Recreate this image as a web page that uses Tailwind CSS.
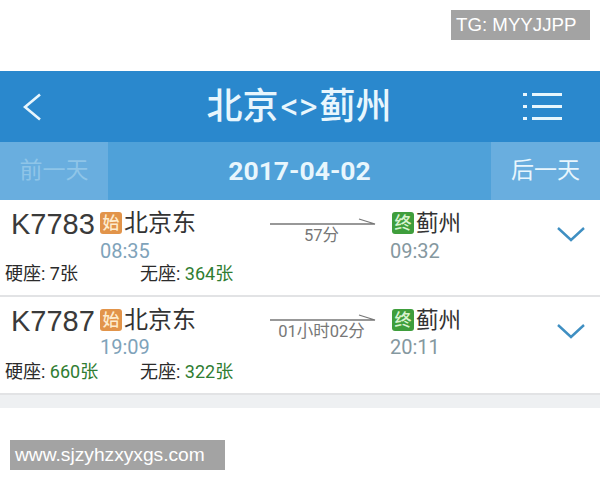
<!DOCTYPE html>
<html lang="zh">
<head>
    <meta charset="UTF-8">
    <title>北京&lt;&gt;蓟州</title>
    <script src="https://cdn.jsdelivr.net/npm/@tailwindcss/browser@4"></script>
</head>
<body class="bg-white w-[600px] h-[480px] overflow-hidden font-['Roboto','Noto_Sans_CJK_SC',sans-serif]">

    <!-- top watermark -->
    <div class="h-[71px] pt-[10px] flex justify-end pr-[10px]">
        <div class="w-[139px] h-[30px] bg-[#a3a3a3] text-white text-[18.700px] leading-[30px] pl-[5px] font-['Liberation_Sans',sans-serif]">TG: MYYJJPP</div>
    </div>

    <!-- header -->
    <div class="h-[71px] bg-[#2a88cd] flex items-center justify-between pl-[23px] pr-[38px] text-[#e8f6fd]">
        <svg class="w-[18px] h-[28px]" viewBox="0 0 18 28" fill="none" stroke="currentColor" stroke-width="2.600"><path d="M17 1.500 2 14 17 26.500"/></svg>
        <div class="text-[36px] leading-[44px] ml-[34px] flex items-center font-medium">北京<span class="px-[2px] font-normal">&lt;&gt;</span>蓟州</div>
        <svg class="w-[39px] h-[30px]" viewBox="0 0 39 30" fill="currentColor">
            <rect x="0" y="1" width="4" height="3"/><rect x="9" y="1" width="30" height="3"/>
            <rect x="0" y="13" width="4" height="3"/><rect x="9" y="13" width="30" height="3"/>
            <rect x="0" y="25" width="4" height="3"/><rect x="9" y="25" width="30" height="3"/>
        </svg>
    </div>

    <!-- date bar -->
    <div class="h-[58px] bg-[#4fa1d9] flex items-center">
        <div class="w-[108px] h-full bg-[#69aedf] flex items-center justify-center text-[23px] text-[#8fc5e8]">前一天</div>
        <div class="flex-1 text-center text-[26.500px] font-bold text-[#e8f6fd]">2017-04-02</div>
        <div class="w-[109px] h-full bg-[#69aedf] flex items-center justify-center text-[23px] text-[#e8f6fd]">后一天</div>
    </div>

    <!-- train 1 -->
    <div class="h-[97px] border-b-2 border-[#e2e3e5] pt-[9px]">
        <div class="flex h-[50px]">
            <div class="w-[100px] pl-[11px] text-[29px] leading-[30px] text-[#3a3a3a] font-['Liberation_Sans',sans-serif]">K7783</div>
            <div class="w-[170px]">
                <div class="flex items-center h-[28px]">
                    <span class="w-[22px] h-[22px] bg-[#e2944a] rounded-[3px] text-[#fdeccf] text-[17px] font-medium leading-[22px] text-center">始</span>
                    <span class="ml-[2px] text-[24px] leading-[28px] text-[#333]">北京东</span>
                </div>
                <div class="text-[20px] leading-[26px] pt-[1px] text-[#7fa3ba]">08:35</div>
            </div>
            <div class="w-[120px] pt-[6px] pr-[17px]">
                <svg class="w-[105px] h-[10px] block overflow-visible" viewBox="0 0 105 10" fill="none" stroke="#777" stroke-width="1.300"><path d="M0 9H105L89 4"/></svg>
                <div class="text-[16.500px] leading-[18px] mt-[2px] text-[#777] text-center">57分</div>
            </div>
            <div class="w-[167px]">
                <div class="flex items-center h-[28px] pl-[2px]">
                    <span class="w-[22px] h-[22px] bg-[#3f9e3c] rounded-[3px] text-[#d8f3cf] text-[17px] font-medium leading-[22px] text-center">终</span>
                    <span class="ml-[2px] text-[22.500px] leading-[28px] text-[#333]">蓟州</span>
                </div>
                <div class="text-[20px] leading-[26px] pt-[1px] text-[#85989f]">09:32</div>
            </div>
            <svg class="w-[28px] h-[15px] mt-[18px]" viewBox="0 0 28 15" fill="none" stroke="#3f8fc2" stroke-width="2.400"><path d="M1 1 14 13 27 1"/></svg>
        </div>
        <div class="flex pl-[5px] mt-[3px] text-[18px] leading-[24px] text-[#2b2b2b]">
            <div class="w-[135px]">硬座: 7张</div>
            <div>无座: <span class="text-[#2f7d32]">364张</span></div>
        </div>
    </div>

    <!-- train 2 -->
    <div class="h-[98px] border-b-2 border-[#e2e3e5] pt-[9px]">
        <div class="flex h-[50px]">
            <div class="w-[100px] pl-[11px] text-[29px] leading-[30px] text-[#3a3a3a] font-['Liberation_Sans',sans-serif]">K7787</div>
            <div class="w-[170px]">
                <div class="flex items-center h-[28px]">
                    <span class="w-[22px] h-[22px] bg-[#e2944a] rounded-[3px] text-[#fdeccf] text-[17px] font-medium leading-[22px] text-center">始</span>
                    <span class="ml-[2px] text-[24px] leading-[28px] text-[#333]">北京东</span>
                </div>
                <div class="text-[20px] leading-[26px] text-[#7fa3ba]">19:09</div>
            </div>
            <div class="w-[120px] pt-[5px] pr-[17px]">
                <svg class="w-[105px] h-[10px] block overflow-visible" viewBox="0 0 105 10" fill="none" stroke="#777" stroke-width="1.300"><path d="M0 9H105L89 4"/></svg>
                <div class="text-[16.500px] leading-[18px] mt-[2px] text-[#777] text-center">01小时02分</div>
            </div>
            <div class="w-[167px]">
                <div class="flex items-center h-[28px] pl-[2px]">
                    <span class="w-[22px] h-[22px] bg-[#3f9e3c] rounded-[3px] text-[#d8f3cf] text-[17px] font-medium leading-[22px] text-center">终</span>
                    <span class="ml-[2px] text-[22.500px] leading-[28px] text-[#333]">蓟州</span>
                </div>
                <div class="text-[20px] leading-[26px] text-[#85989f]">20:11</div>
            </div>
            <svg class="w-[28px] h-[15px] mt-[18px]" viewBox="0 0 28 15" fill="none" stroke="#3f8fc2" stroke-width="2.400"><path d="M1 1 14 13 27 1"/></svg>
        </div>
        <div class="flex pl-[5px] mt-[4px] text-[18px] leading-[24px] text-[#2b2b2b]">
            <div class="w-[135px]">硬座: <span class="text-[#2f7d32]">660张</span></div>
            <div>无座: <span class="text-[#2f7d32]">322张</span></div>
        </div>
    </div>

    <div class="h-[13px] bg-[#eef0f2]"></div>

    <!-- bottom watermark -->
    <div class="mt-[32px] ml-[10px] w-[215px] h-[30px] bg-[#a3a3a3] text-white text-[19.200px] leading-[30px] pl-[5px] font-['Liberation_Sans',sans-serif]">www.sjzyhzxyxgs.com</div>

</body>
</html>
